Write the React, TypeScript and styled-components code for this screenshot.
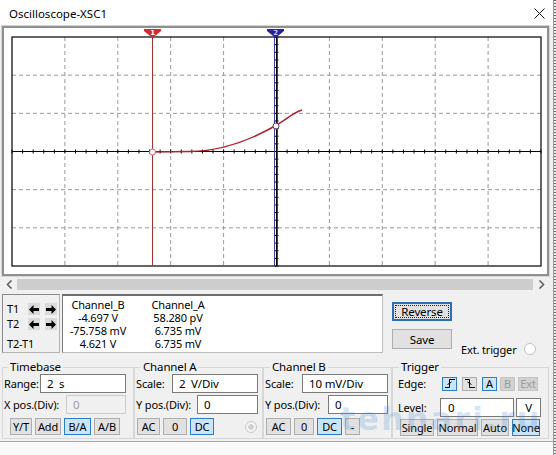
import React from "react";
import styled, { createGlobalStyle, css } from "styled-components";

const GlobalStyle = createGlobalStyle`
  html, body { margin: 0; padding: 0; }
  body {
    width: 556px; height: 455px; overflow: hidden;
    background: #f9f9f9;
    font-family: "Noto Sans", "Open Sans", Arial, sans-serif;
    font-size: 11px; color: #000;
    letter-spacing: -0.15px;
  }
  #root { width: 556px; height: 455px; }
`;

const Page = styled.div`
  position: relative;
  display: flex;
  width: 556px;
  height: 455px;
`;

const Dialog = styled.div`
  width: 553px;
  height: 442px;
  box-sizing: border-box;
  display: flex;
  flex-direction: column;
  background: #f0f0f0;
  border-bottom: 1px solid #a9a9a9;
`;

const EdgeStrip = styled.div`
  width: 3px;
  height: 455px;
  box-sizing: border-box;
  border-left: 1px solid #9c9c9c;
  background: repeating-linear-gradient(to bottom, #6a6a6a 0 1px, #efefef 1px 3px);
`;

const TitleBar = styled.div`
  height: 26px;
  flex: none;
  display: flex;
  align-items: center;
  justify-content: space-between;
  padding: 0 8px 0 9px;
  background: #ffffff;
  font-size: 11.5px;
  letter-spacing: 0;
`;

const ScreenFrame = styled.div`
  flex: none;
  height: 250px;
  margin: 0 4px 0 2px;
  box-sizing: border-box;
  border: 2px solid #8f8f8f;
  box-shadow: 0 0 0 1px #d6d6d6;
  background: #ffffff;
  svg { display: block; }
`;

const ScrollBar = styled.div`
  flex: none;
  display: flex;
  align-items: stretch;
  height: 11px;
  margin: 3px 4px 0 2px;
`;

const ScrollArrow = styled.div<{ $w: number }>`
  width: ${(p) => p.$w}px;
  display: flex;
  align-items: center;
  justify-content: center;
`;

const ScrollThumb = styled.div`
  flex: 1;
  background: #cdcdcd;
`;

const ReadoutRow = styled.div`
  flex: none;
  display: flex;
  height: 59px;
  margin-top: 4px;
  padding-left: 2px;
`;

const CursorBox = styled.div`
  width: 58px;
  box-sizing: border-box;
  border: 1px solid #b4b4b4;
  border-top-color: #8a8a8a;
  border-left-color: #8a8a8a;
  padding: 8px 0 0 4px;
  display: flex;
  flex-direction: column;
  gap: 3px;
`;

const CursorLine = styled.div`
  display: flex;
  align-items: center;
  height: 12px;
`;

const CursorLabel = styled.span<{ $mt?: number }>`
  width: 21px;
  flex: none;
  white-space: nowrap;
  line-height: 14px;
  margin-top: ${(p) => p.$mt ?? 0}px;
`;

const ArrowButton = styled.div<{ $gap?: number }>`
  width: 12px;
  height: 12px;
  margin-left: ${(p) => p.$gap ?? 0}px;
  background: #dadada;
  display: flex;
  align-items: center;
  justify-content: center;
`;

const ReadoutBox = styled.div`
  width: 321px;
  margin-left: 2px;
  box-sizing: border-box;
  background: #ffffff;
  border: 1px solid #bdbdbd;
  border-top: 2px solid #6e6e6e;
  border-left-color: #777777;
  padding-top: 2px;
  display: grid;
  grid-template-columns: 70px 70px;
  grid-auto-rows: 13px;
  column-gap: 10px;
  align-content: start;
  text-align: center;
  line-height: 13px;
`;

const SideButtons = styled.div`
  margin-left: 9px;
  padding-top: 8px;
  display: flex;
  flex-direction: column;
  gap: 8px;
`;

const ExtTrigger = styled.div`
  margin-left: 9px;
  margin-top: 48px;
  height: 14px;
  display: flex;
  align-items: center;
  gap: 7px;
`;

const Radio = styled.span`
  width: 12px;
  height: 12px;
  box-sizing: border-box;
  border-radius: 50%;
  border: 1px solid #c3c3c3;
  background: #ffffff;
  display: inline-block;
`;

const DimRadio = styled.span`
  width: 12px;
  height: 12px;
  box-sizing: border-box;
  border-radius: 50%;
  border: 1px solid #c9c9c9;
  background: radial-gradient(circle, #d0d0d0 0 2.5px, #f4f4f4 3px);
  display: inline-block;
`;

const Groups = styled.div`
  flex: none;
  display: flex;
  margin: 7px 4px 0 2px;
  height: 79px;
`;

const Group = styled.fieldset<{ $w: number; $pl?: number }>`
  width: ${(p) => p.$w}px;
  height: 79px;
  margin: 0;
  padding: 0 0 0 ${(p) => p.$pl ?? 0}px;
  min-width: 0;
  box-sizing: border-box;
  border: 1px solid #d7d7d7;
  display: flex;
  flex-direction: column;
`;

const Legend = styled.legend<{ $ml?: number }>`
  padding: 0 2px;
  margin-left: ${(p) => p.$ml ?? 5}px;
  line-height: 14px;
  font-size: 11.5px;
`;

const Row = styled.div<{ $mt?: number; $pl?: number; $h?: number; $gap?: number }>`
  display: flex;
  align-items: center;
  height: ${(p) => p.$h ?? 19}px;
  margin-top: ${(p) => p.$mt ?? 0}px;
  padding-left: ${(p) => p.$pl ?? 0}px;
  gap: ${(p) => p.$gap ?? 0}px;
`;

const Label = styled.span<{ $w: number }>`
  width: ${(p) => p.$w}px;
  flex: none;
  white-space: nowrap;
  padding-left: 1px;
  box-sizing: border-box;
`;

const Field = styled.div<{ $w: number; $disabled?: boolean; $center?: boolean; $pl?: number; $ml?: number }>`
  width: ${(p) => p.$w}px;
  height: 19px;
  box-sizing: border-box;
  flex: none;
  margin-left: ${(p) => p.$ml ?? 0}px;
  display: flex;
  align-items: center;
  justify-content: ${(p) => (p.$center ? "center" : "flex-start")};
  padding-left: ${(p) => (p.$center ? 0 : p.$pl ?? 6)}px;
  white-space: pre;
  font-size: 11.5px;
  background: ${(p) => (p.$disabled ? "#f0f0f0" : "#ffffff")};
  border: 1px solid ${(p) => (p.$disabled ? "#cccccc" : "#7a7a7a")};
  color: ${(p) => (p.$disabled ? "#9e9e9e" : "#000")};
`;

type Variant = "normal" | "active" | "disabled";

const Btn = styled.div<{ $w: number; $h?: number; $v?: Variant; $ml?: number }>`
  width: ${(p) => p.$w}px;
  height: ${(p) => p.$h ?? 17}px;
  margin-left: ${(p) => p.$ml ?? 0}px;
  flex: none;
  box-sizing: border-box;
  display: flex;
  align-items: center;
  justify-content: center;
  line-height: 1;
  white-space: nowrap;
  background: #e1e1e1;
  border: 1px solid #adadad;
  ${(p) =>
    p.$v === "active" &&
    css`
      background: #cce4f7;
      border-color: #2c7cc6;
    `}
  ${(p) =>
    p.$v === "disabled" &&
    css`
      background: #d2d2d2;
      border-color: #c4c4c4;
      color: #9a9a9a;
    `}
`;

const DialogButton = styled.div<{ $focus?: boolean; $h: number }>`
  width: 60px;
  height: ${(p) => p.$h}px;
  box-sizing: border-box;
  display: flex;
  align-items: center;
  justify-content: center;
  font-size: 11.5px;
  background: #e1e1e1;
  border: 1px solid #adadad;
  ${(p) =>
    p.$focus &&
    css`
      border: 2px solid #2b6fb6;
      outline: 1px dotted #222;
      outline-offset: -4px;
    `}
`;

const Watermark = styled.div`
  position: absolute;
  left: 340px;
  top: 400px;
  font-family: "DejaVu Sans", sans-serif;
  font-weight: bold;
  font-size: 32px;
  letter-spacing: 2px;
  color: rgba(70, 135, 210, 0.22);
  pointer-events: none;
`;

const LeftArrowIcon = () => (
  <svg width="10" height="9" viewBox="0 0 10 9">
    <path d="M0 4.5 L4.5 0 V3 H10 V6 H4.5 V9 Z" fill="#000" />
  </svg>
);
const RightArrowIcon = () => (
  <svg width="10" height="9" viewBox="0 0 10 9">
    <path d="M10 4.5 L5.5 0 V3 H0 V6 H5.5 V9 Z" fill="#000" />
  </svg>
);

const RisingEdge = () => (
  <svg width="12" height="11" viewBox="0 0 12 11">
    <path d="M1 9.5 H5.5 V1.5 H11 M3.5 6.5 L7.5 4" stroke="#000" strokeWidth="1" fill="none" />
  </svg>
);
const FallingEdge = () => (
  <svg width="12" height="11" viewBox="0 0 12 11">
    <path d="M1 1.5 H5.5 V9.5 H11 M3.5 4 L7.5 6.5" stroke="#000" strokeWidth="1" fill="none" />
  </svg>
);

const Chevron = ({ dir }: { dir: "l" | "r" }) => (
  <svg width="7" height="9" viewBox="0 0 7 9">
    <path
      d={dir === "l" ? "M5.5 0.5 L1.5 4.5 L5.5 8.5" : "M1.5 0.5 L5.5 4.5 L1.5 8.5"}
      stroke="#606060"
      strokeWidth="1.6"
      fill="none"
    />
  </svg>
);

const CloseIcon = () => (
  <svg width="11" height="11" viewBox="0 0 11 11">
    <path d="M0.5 0.5 L10.5 10.5 M10.5 0.5 L0.5 10.5" stroke="#1a1a1a" strokeWidth="1" />
  </svg>
);

const X0 = 12;
const X1 = 541;
const Y0 = 37;
const Y1 = 266;
const DX = (X1 - X0) / 10;
const DY = (Y1 - Y0) / 6;
const CX = X0 + DX * 5;
const CY = Y0 + DY * 3;

const ScopeScreen = () => {
  const vLines = Array.from({ length: 9 }, (_, i) => X0 + DX * (i + 1)).filter((_, i) => i !== 4);
  const hLines = Array.from({ length: 5 }, (_, i) => Y0 + DY * (i + 1)).filter((_, i) => i !== 2);
  const hTicks = Array.from({ length: 51 }, (_, i) => X0 + (DX / 5) * i);
  const vTicks = Array.from({ length: 31 }, (_, i) => Y0 + (DY / 5) * i);
  return (
    <svg width="543" height="246" viewBox="4 28 543 246">
      {vLines.map((x) => (
        <line key={`v${x}`} x1={x} y1={Y0} x2={x} y2={Y1} stroke="#9a9a9a" strokeDasharray="4 3" />
      ))}
      {hLines.map((y) => (
        <line key={`h${y}`} x1={X0} y1={y} x2={X1} y2={y} stroke="#9a9a9a" strokeDasharray="4 3" />
      ))}
      <line x1={X0} y1={CY} x2={X1} y2={CY} stroke="#000" strokeWidth="1.2" />
      <line x1={CX} y1={Y0} x2={CX} y2={Y1} stroke="#000" strokeWidth="1" />
      {hTicks.map((x) => (
        <line key={`ht${x}`} x1={x} y1={CY - 2} x2={x} y2={CY + 2} stroke="#000" />
      ))}
      {vTicks.map((y) => (
        <line key={`vt${y}`} x1={CX - 2} y1={y} x2={CX + 2} y2={y} stroke="#000" />
      ))}
      <rect x={X0} y={Y0} width={X1 - X0} height={Y1 - Y0} fill="none" stroke="#000" strokeWidth="1.2" />

      {/* cursor 1 */}
      <line x1="152.5" y1="37" x2="152.5" y2={Y1} stroke="#a83232" strokeWidth="1" />
      <path d="M144 29 H161 V31 L152.5 38 L144 31 Z" fill="#d42a2a" />
      <text x="152.5" y="35" textAnchor="middle" fontSize="7" fontWeight="bold" fill="#fff" fontFamily="DejaVu Sans, sans-serif">1</text>

      {/* cursor 2 */}
      <line x1="274.5" y1="37" x2="274.5" y2={Y1} stroke="#2a2a90" strokeWidth="0.9" />
      <line x1="277.5" y1="37" x2="277.5" y2={Y1} stroke="#2a2a90" strokeWidth="0.9" />
      <path d="M267 29 H284 V31 L275.5 38 L267 31 Z" fill="#25259c" />
      <text x="275.5" y="35" textAnchor="middle" fontSize="7" fontWeight="bold" fill="#c8c8ff" fontFamily="DejaVu Sans, sans-serif">2</text>

      {/* trace */}
      <path
        d="M152 152 L190 151.6 C215 151.2 245 143 275 126 C287 119 294 112 302 110"
        stroke="#b3202e"
        strokeWidth="1.5"
        fill="none"
      />
      <circle cx="152.5" cy="152" r="3" fill="#fff" stroke="#d06070" strokeWidth="1" />
      <circle cx="276" cy="126" r="3" fill="#fff" stroke="#6a3a6a" strokeWidth="1" />
    </svg>
  );
};

export default function App() {
  return (
    <>
      <GlobalStyle />
      <Page>
        <Dialog>
          <TitleBar>
            <span>Oscilloscope-XSC1</span>
            <CloseIcon />
          </TitleBar>

          <ScreenFrame>
            <ScopeScreen />
          </ScreenFrame>

          <ScrollBar>
            <ScrollArrow $w={15}>
              <Chevron dir="l" />
            </ScrollArrow>
            <ScrollThumb />
            <ScrollArrow $w={16}>
              <Chevron dir="r" />
            </ScrollArrow>
          </ScrollBar>

          <ReadoutRow>
            <CursorBox>
              <CursorLine>
                <CursorLabel>T1</CursorLabel>
                <ArrowButton>
                  <LeftArrowIcon />
                </ArrowButton>
                <ArrowButton $gap={5}>
                  <RightArrowIcon />
                </ArrowButton>
              </CursorLine>
              <CursorLine>
                <CursorLabel>T2</CursorLabel>
                <ArrowButton>
                  <LeftArrowIcon />
                </ArrowButton>
                <ArrowButton $gap={5}>
                  <RightArrowIcon />
                </ArrowButton>
              </CursorLine>
              <CursorLabel $mt={4}>T2-T1</CursorLabel>
            </CursorBox>

            <ReadoutBox>
              <span>Channel_B</span>
              <span>Channel_A</span>
              <span>-4.697 V</span>
              <span>58.280 pV</span>
              <span>-75.758 mV</span>
              <span>6.735 mV</span>
              <span>4.621 V</span>
              <span>6.735 mV</span>
            </ReadoutBox>

            <SideButtons>
              <DialogButton $focus $h={19}>Reverse</DialogButton>
              <DialogButton $h={20}>Save</DialogButton>
            </SideButtons>

            <ExtTrigger>
              <span>Ext. trigger</span>
              <Radio />
            </ExtTrigger>
          </ReadoutRow>

          <Groups>
            <Group $w={132}>
              <Legend>Timebase</Legend>
              <Row>
                <Label $w={37}>Range:</Label>
                <Field $w={86}>2  s</Field>
              </Row>
              <Row $mt={2}>
                <Label $w={63}>X pos.(Div):</Label>
                <Field $w={60} $disabled>0</Field>
              </Row>
              <Row $mt={4} $h={17} $pl={7} $gap={3}>
                <Btn $w={22}>Y/T</Btn>
                <Btn $w={26}>Add</Btn>
                <Btn $w={27} $v="active">B/A</Btn>
                <Btn $w={26}>A/B</Btn>
              </Row>
            </Group>

            <Group $w={129}>
              <Legend $ml={6}>Channel A</Legend>
              <Row>
                <Label $w={37}>Scale:</Label>
                <Field $w={86}>2  V/Div</Field>
              </Row>
              <Row $mt={2}>
                <Label $w={62}>Y pos.(Div):</Label>
                <Field $w={61}>0</Field>
              </Row>
              <Row $mt={4} $h={17} $pl={2} $gap={3}>
                <Btn $w={23}>AC</Btn>
                <Btn $w={24}>0</Btn>
                <Btn $w={24} $v="active">DC</Btn>
                <DimRadio style={{ marginLeft: 28 }} />
              </Row>
            </Group>

            <Group $w={129}>
              <Legend $ml={6}>Channel B</Legend>
              <Row>
                <Label $w={38}>Scale:</Label>
                <Field $w={86}>10 mV/Div</Field>
              </Row>
              <Row $mt={2}>
                <Label $w={64}>Y pos.(Div):</Label>
                <Field $w={60}>0</Field>
              </Row>
              <Row $mt={4} $h={17} $pl={2} $gap={3}>
                <Btn $w={25}>AC</Btn>
                <Btn $w={20}>0</Btn>
                <Btn $w={25} $v="active">DC</Btn>
                <Btn $w={15}>-</Btn>
              </Row>
            </Group>

            <Group $w={157} $pl={4}>
              <Legend $ml={2}>Trigger</Legend>
              <Row>
                <Label $w={45}>Edge:</Label>
                <Btn $w={15} $h={14} $v="active">
                  <RisingEdge />
                </Btn>
                <Btn $w={15} $h={14} $ml={5}>
                  <FallingEdge />
                </Btn>
                <Btn $w={15} $h={14} $ml={5} $v="active">A</Btn>
                <Btn $w={15} $h={14} $ml={3} $v="disabled">B</Btn>
                <Btn $w={20} $h={14} $ml={3} $v="disabled">Ext</Btn>
              </Row>
              <Row $mt={5}>
                <Label $w={43}>Level:</Label>
                <Field $w={74} $pl={7}>0</Field>
                <Field $w={25} $center $ml={2}>V</Field>
              </Row>
              <Row $mt={2} $h={17} $pl={3} $gap={3}>
                <Btn $w={34}>Single</Btn>
                <Btn $w={41}>Normal</Btn>
                <Btn $w={28}>Auto</Btn>
                <Btn $w={28} $v="active">None</Btn>
              </Row>
            </Group>
          </Groups>
        </Dialog>
        <EdgeStrip />
        <Watermark>tehnari.ru</Watermark>
      </Page>
    </>
  );
}
